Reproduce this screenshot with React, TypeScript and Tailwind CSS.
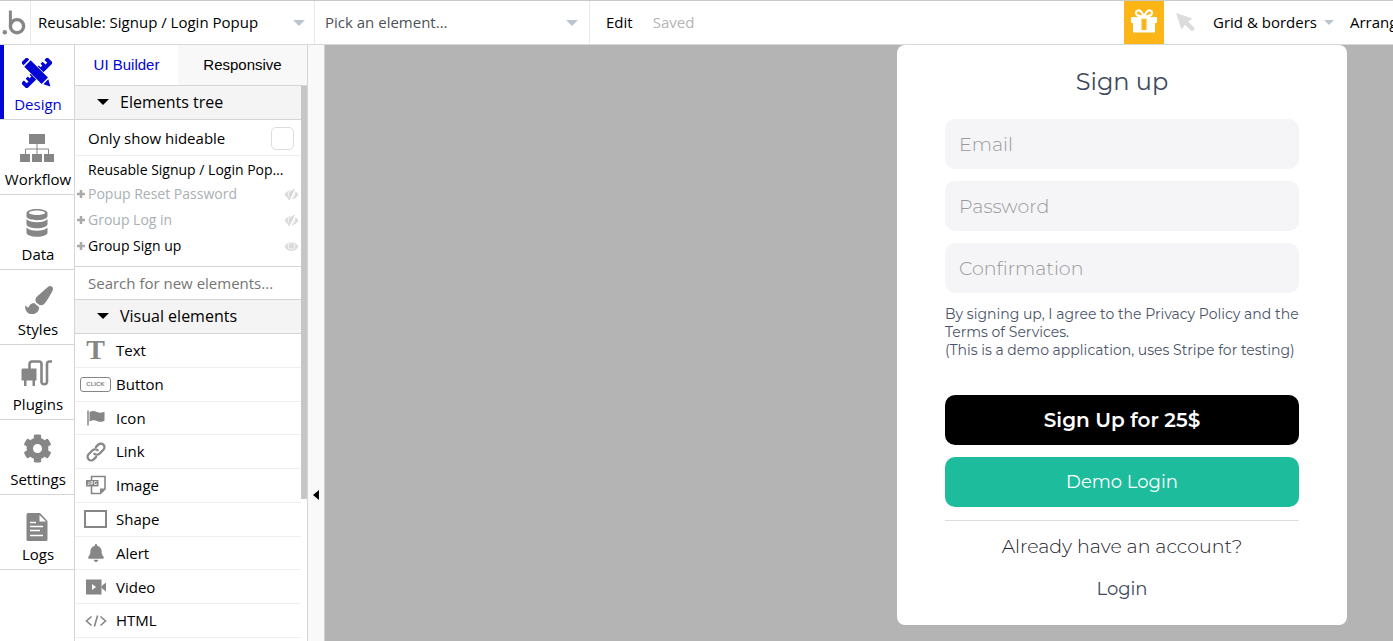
import type { ReactNode } from 'react';
import { FaBell, FaCog, FaPaintBrush } from 'react-icons/fa';

const GRAY = '#868686';
const BLUE = '#0205d3';

function Logo() {
  return (
    <svg width="24" height="26" viewBox="0 0 24 26" fill="none" aria-label="Bubble">
      <circle cx="2.8" cy="22.3" r="2.2" fill={GRAY} />
      <path d="M8.4 0.5V16" stroke={GRAY} strokeWidth="3" />
      <circle cx="15" cy="16.2" r="6.600" stroke={GRAY} strokeWidth="3.400" />
    </svg>
  );
}

function DesignIcon() {
  return (
    <svg width="30" height="30" viewBox="0 0 30 30" fill={BLUE}>
      <g transform="rotate(45 15 15)">
        <path d="M11-3.500h8v37h-8v-4h4v-2.500h-4v-3h2.500v-2.500H11V8.500h2.500V6H11V3h4V.5h-4z" />
      </g>
      <g transform="rotate(-45 15 15)">
        <path d="M9.800-1.500h10.400v28H9.800z" fill="#fff" />
        <path d="M11-3.500h8v3.500h-8zM10.500 1.500h9v24.500h-9zM11.500 27.500h7L15 34z" />
      </g>
    </svg>
  );
}

function WorkflowIcon() {
  return (
    <svg width="34" height="28" viewBox="0 0 34 28" fill={GRAY}>
      <path d="M9 0h16v10H9zM0 20h10v8H0zM12 20h10v8H12zM24 20h10v8H24z" />
      <path d="M17 10v10M5.500 20v-5h23v5" fill="none" stroke={GRAY} />
    </svg>
  );
}

function DataIcon() {
  return (
    <svg width="22" height="28" viewBox="0 0 22 28" fill={GRAY}>
      <path fillRule="evenodd" d="M11 0c6 0 10.500 1.700 10.500 4v3c0 2.500-4.500 4.200-10.500 4.200S.5 9.500.5 7V4C.5 1.700 5 0 11 0zm0 1.500c-4.700 0-8 1-8 2.300S6.300 6 11 6s8-.9 8-2.200-3.300-2.300-8-2.300z" />
      <path d="M.5 10c2 2.300 6 3.200 10.500 3.200s8.500-.9 10.500-3.200v5c0 2.500-4.500 4.300-10.500 4.300S.5 17.500.5 15z" />
      <path d="M.5 18.500c2 2.300 6 3.200 10.500 3.200s8.500-.9 10.500-3.200v5c0 2.500-4.500 4.300-10.500 4.300S.5 26 .5 23.500z" />
    </svg>
  );
}

function PluginsIcon() {
  return (
    <svg width="32" height="27" viewBox="0 0 32 27">
      <path d="M1.500 8.500h14v12h-1.500V26h-2.500v-5.500H5.500V26H3v-5.500H.5v-11z" fill={GRAY} />
      <path d="M8.500 9V4a2.500 2.500 0 0 1 2.500-2.500h7a2.500 2.500 0 0 1 2.500 2.500v18a2.800 2.800 0 0 0 5.500 0V4a2.500 2.500 0 0 1 2.500-2.500h2.500" fill="none" stroke={GRAY} strokeWidth="2.600" />
    </svg>
  );
}

function LogsIcon() {
  return (
    <svg width="22" height="28" viewBox="0 0 22 28">
      <path d="M1.500 0H14l7.500 8v18.500a1.500 1.500 0 0 1-1.500 1.500H2a1.500 1.500 0 0 1-1.500-1.500v-25z" fill={GRAY} />
      <path d="M13.500 2v6.500H20" fill="#fff" />
      <path d="M4 9.500h6M4 13.500h13M4 17.500h10M4 22.500h13" stroke="#fff" strokeWidth="1.400" />
    </svg>
  );
}

function Gift() {
  return (
    <svg width="28" height="24" viewBox="0 0 28 24">
      <path d="M1 8h26v6h-2v9.500H3V14H1z" fill="#fff" />
      <path d="M11.500 9.500h5V21h-5z" fill="#fbb516" />
      <path d="M14 8C12 2.500 9.500 1.300 7.800 1.500 5.500 1.800 5.300 5 7.500 6.300 9 7.200 12 7.700 14 8c2-.3 5-.8 6.500-1.700 2.200-1.300 2-4.500-.3-4.800C18.500 1.300 16 2.500 14 8z" fill="none" stroke="#fff" strokeWidth="2.200" />
    </svg>
  );
}

function Caret({ dark = false }: { dark?: boolean }) {
  return (
    <span
      className={
        'inline-block shrink-0 border-x-[6px] border-t-[6px] border-x-transparent ' +
        (dark ? 'border-t-black' : 'border-t-[#b9c6cf]')
      }
    />
  );
}

function SmallCaret() {
  return <span className="inline-block shrink-0 border-x-[5px] border-t-[5px] border-x-transparent border-t-[#b9c6cf]" />;
}

function EyeIcon({ slashed }: { slashed: boolean }) {
  return (
    <svg className="mr-[2px]" width="15" height="11" viewBox="0 0 14 11">
      <path d="M0 5.500C1.800 2.500 4.200 1 7 1s5.200 1.500 7 4.500C12.200 8.500 9.800 10 7 10S1.800 8.500 0 5.500z" fill="#dadada" />
      <circle cx="7" cy="5" r="3.400" fill="none" stroke="#fff" strokeWidth=".8" />
      {slashed && (
        <>
          <path d="M10.800 0L5.400 11" stroke="#fff" strokeWidth="2.400" />
          <path d="M9.600 0L4.200 11" stroke="#d2d2d2" strokeWidth="1.300" />
        </>
      )}
    </svg>
  );
}

function LinkIcon() {
  return (
    <svg width="20" height="20" viewBox="0 0 20 20" fill="none" stroke={GRAY} strokeWidth="2.200" strokeLinecap="round">
      <path d="M8.300 11.700a3.600 3.600 0 0 0 5.100 0l4-4a3.600 3.600 0 0 0-5.100-5.100L9.800 5.100" />
      <path d="M11.700 8.300a3.600 3.600 0 0 0-5.100 0l-4 4a3.600 3.600 0 0 0 5.100 5.100l2.500-2.500" />
    </svg>
  );
}

function ImageIcon() {
  return (
    <svg width="20" height="20" viewBox="0 0 20 20">
      <path d="M5.500 5V1.500h13.500V14l-4.500 4.500H5.500V11" fill="none" stroke={GRAY} strokeWidth="1.600" />
      <path d="M19 13.500h-5v5z" fill={GRAY} />
      <path d="M0 5h12.500v6.500H0z" fill={GRAY} />
      <path d="M3 6.500v3H1.500M5 10V6.500h1.500v2H5M10.500 6.500H8.500v3h2V8.300" fill="none" stroke="#fff" strokeWidth=".7" />
    </svg>
  );
}

function VideoIcon() {
  return (
    <svg width="20" height="16" viewBox="0 0 20 16">
      <path fillRule="evenodd" d="M0 .5h15.500v15H0zM6 5v6l4-3z" fill={GRAY} />
      <path d="M15.500 7l4.500-3.500v9L15.500 9z" fill={GRAY} />
    </svg>
  );
}

function FlagIcon() {
  return (
    <svg width="18" height="16" viewBox="0 0 18 16">
      <path d="M1 .5V15.500" stroke={GRAY} strokeWidth="1.500" />
      <path d="M2.500 2c3-1.500 5-1.200 7.500 0s4.500 1 7.500-.3v9c-3 1.500-5 1.500-7.500.3s-4.500-1-7.500.4z" fill={GRAY} />
    </svg>
  );
}

function CodeIcon() {
  return (
    <svg width="22" height="12" viewBox="0 0 22 12" fill="none" stroke={GRAY} strokeWidth="1.600">
      <path d="M6.500 1.500L1.500 6l5 4.500M15.500 1.500l5 4.500-5 4.500M12.600.5L9.400 11.500" />
    </svg>
  );
}

const nav: { label: string; icon: ReactNode }[] = [
  { label: 'Design', icon: <DesignIcon /> },
  { label: 'Workflow', icon: <WorkflowIcon /> },
  { label: 'Data', icon: <DataIcon /> },
  { label: 'Styles', icon: <FaPaintBrush size={28} color={GRAY} className="mt-1 ml-1" /> },
  { label: 'Plugins', icon: <PluginsIcon /> },
  { label: 'Settings', icon: <FaCog size={29} color={GRAY} /> },
  { label: 'Logs', icon: <span className="mt-2"><LogsIcon /></span> },
];

const visual: { label: string; icon: ReactNode }[] = [
  { label: 'Text', icon: <span className="font-['Liberation_Serif',serif] text-[28px] font-bold leading-none text-[#868686]">T</span> },
  { label: 'Button', icon: <span className="flex h-[15px] w-[31px] items-center justify-center rounded-[3px] border border-[#868686] font-['Liberation_Sans',sans-serif] text-[6px] font-bold text-[#868686]">CLICK</span> },
  { label: 'Icon', icon: <FlagIcon /> },
  { label: 'Link', icon: <LinkIcon /> },
  { label: 'Image', icon: <ImageIcon /> },
  { label: 'Shape', icon: <span className="h-[18px] w-[23px] border-2 border-[#868686]" /> },
  { label: 'Alert', icon: <FaBell size={18} color={GRAY} /> },
  { label: 'Video', icon: <VideoIcon /> },
  { label: 'HTML', icon: <CodeIcon /> },
];

const tree = [
  { label: 'Popup Reset Password', hidden: true },
  { label: 'Group Log in', hidden: true },
  { label: 'Group Sign up', hidden: false },
];

function SectionHeader({ children }: { children: string }) {
  return (
    <h2>
      <button className="flex h-[34px] w-full items-center gap-[11px] border-b border-[#d5d5d5] bg-[#f4f4f4] pb-[2px] pl-[22px] text-base">
        <Caret dark />
        {children}
      </button>
    </h2>
  );
}

function TopBar() {
  return (
    <header className="flex h-[45px] shrink-0 items-stretch overflow-hidden whitespace-nowrap border-y border-t-[#c9c9c9] border-b-[#d9d9d9] bg-white text-[15px]">
      <div className="flex w-[31px] shrink-0 items-center border-r border-[#e4eaed] pl-[2px]">
        <Logo />
      </div>
      <button className="flex w-[284px] shrink-0 items-center justify-between border-r border-[#e4eaed] pl-[7px] pr-[9px]">
        Reusable: Signup / Login Popup
        <Caret />
      </button>
      <button className="flex w-[275px] shrink-0 items-center justify-between border-r border-[#e4eaed] pl-[10px] pr-[11px] text-[#4b5257]">
        Pick an element...
        <Caret />
      </button>
      <button className="ml-4 shrink-0">Edit</button>
      <span className="ml-5 self-center text-[#b5b5b5]">Saved</span>
      <div className="ml-auto flex w-[269px] shrink-0 items-center">
        <button aria-label="Gifts" className="flex w-10 shrink-0 items-center justify-center self-stretch bg-[#fbb516] pb-1">
          <Gift />
        </button>
        <svg className="ml-3 shrink-0" width="19" height="19" viewBox="0 0 19 19" fill="#dcdcdc">
          <path d="M0 0l16.500 5.500-4.300 3.200L19 15.500 16 18.500l-7-6.800-3.500 4.800z" />
        </svg>
        <button className="ml-[18px] flex shrink-0 items-center gap-[7px]">
          Grid &amp; borders
          <SmallCaret />
        </button>
        <button className="ml-4 shrink-0">Arrange</button>
      </div>
    </header>
  );
}

function SideNav() {
  return (
    <nav className="w-[75px] shrink-0 border-r border-[#d5d5d5] bg-white text-[15px]">
      {nav.map((item, i) => (
        <a
          key={item.label}
          href={'#' + item.label.toLowerCase()}
          className={
            'flex h-[75px] flex-col items-center border-b border-[#d5d5d5] pt-3 ' +
            (i === 0 ? 'text-[#0205d3] shadow-[inset_4px_0_0_#0205d3]' : '')
          }
        >
          <span className="flex h-8 items-center">{item.icon}</span>
          <span className="mt-[5px] pl-[2px] leading-5">{item.label}</span>
        </a>
      ))}
    </nav>
  );
}

function ElementsPanel() {
  return (
    <aside className="flex w-[233px] shrink-0 flex-col border-r border-[#d5d5d5] bg-white">
      <div className="flex h-[41px] shrink-0 border-b border-[#d5d5d5] font-['Liberation_Sans',sans-serif] text-[15px]">
        <button className="w-[103px] text-[#0205d3]">UI Builder</button>
        <button className="flex-1 bg-[#f8f8f8]">Responsive</button>
      </div>
      <div className="flex min-h-0 flex-1 overflow-hidden">
        <div className="min-w-0 flex-1">
          <SectionHeader>Elements tree</SectionHeader>
          <label className="flex h-9 items-center justify-between border-b border-[#eee] pl-[13px] pr-[7px] pt-px text-[15px]">
            Only show hideable
            <input type="checkbox" className="size-[23px] appearance-none rounded-[5px] border border-[#ddd] bg-white" />
          </label>
          <div className="border-b border-[#d5d5d5] pb-[7px] pt-1 text-sm">
            <div className="mb-px truncate pl-[13px] pr-3 leading-5">Reusable Signup / Login Popup</div>
            {tree.map((t) => (
              <div key={t.label} className={'flex h-[26px] items-center ' + (t.hidden ? 'text-[#a9afb3]' : '')}>
                <svg className="ml-px mr-[2px]" width="10" height="10" viewBox="0 0 10 10" stroke="#a9a9a9" strokeWidth="2.500">
                  <path d="M5 1v8M1 5h8" />
                </svg>
                <span className="flex-1">{t.label}</span>
                <EyeIcon slashed={t.hidden} />
              </div>
            ))}
          </div>
          <input
            aria-label="Search for new elements"
            placeholder="Search for new elements..."
            className="block h-[33px] w-full border-b border-[#d5d5d5] px-[13px] text-[15px] outline-none placeholder:text-[#757575]"
          />
          <SectionHeader>Visual elements</SectionHeader>
          <ul className="grid h-[304px] auto-rows-fr text-[15px]">
            {visual.map((v) => (
              <li key={v.label} className="flex items-center border-b border-[#eee] pl-1">
                <span className="flex w-[33px] justify-center">{v.icon}</span>
                <span className="ml-1">{v.label}</span>
              </li>
            ))}
          </ul>
        </div>
        <div className="w-[6px] shrink-0">
          <div className="h-[413px] bg-[#c6c6c6]" />
        </div>
      </div>
    </aside>
  );
}

const field =
  'h-[50px] w-full rounded-[10px] bg-[#f5f5f7] px-[14px] text-[19px] font-light outline-none placeholder:text-[#999]';

function SignupCard() {
  return (
    <form className="w-[450px] self-start rounded-lg bg-white px-12 pb-[22px] pt-5 font-['Montserrat','Inter',sans-serif]">
      <h1 className="text-center text-2xl leading-[34px] text-[#3d4a60]">Sign up</h1>
      <div className="mt-5 flex flex-col gap-3">
        <input aria-label="Email" type="email" placeholder="Email" className={field} />
        <input aria-label="Password" type="password" placeholder="Password" className={field} />
        <input aria-label="Confirmation" type="password" placeholder="Confirmation" className={field} />
      </div>
      <p className="mt-3 whitespace-nowrap text-sm leading-[18px] text-[#4b5468]">
        By signing up, I agree to the Privacy Policy and the
        <br />
        Terms of Services.
        <br />
        (This is a demo application, uses Stripe for testing)
      </p>
      <div className="mt-9 flex flex-col gap-3">
        <button type="button" className="h-[50px] rounded-[10px] bg-black text-xl font-semibold text-white">Sign Up for 25$</button>
        <button type="button" className="h-[50px] rounded-[10px] bg-[#1cbc9c] text-lg text-white">Demo Login</button>
      </div>
      <div className="mt-[13px] flex flex-col items-center border-t border-[#ddd] pt-3">
        <p className="text-[19px] font-light leading-7 text-[#1d212b]">Already have an account?</p>
        <a href="#login" className="mt-[14px] text-lg leading-7 text-[#3d4a60]">Login</a>
      </div>
    </form>
  );
}

export default function App() {
  return (
    <div className="flex h-screen flex-col overflow-hidden font-['Open_Sans',sans-serif] text-black">
      <TopBar />
      <div className="flex min-h-0 flex-1">
        <SideNav />
        <ElementsPanel />
        <button aria-label="Collapse panel" className="flex w-[17px] shrink-0 flex-col items-center border-r border-[#d0d0d0] bg-[#f9f9f9]">
          <span className="h-[445px]" />
          <span className="border-y-[5px] border-r-[6px] border-y-transparent border-r-black" />
        </button>
        <main className="flex min-w-0 flex-1 justify-end bg-[#b4b4b4] pr-[46px]">
          <SignupCard />
        </main>
      </div>
    </div>
  );
}
